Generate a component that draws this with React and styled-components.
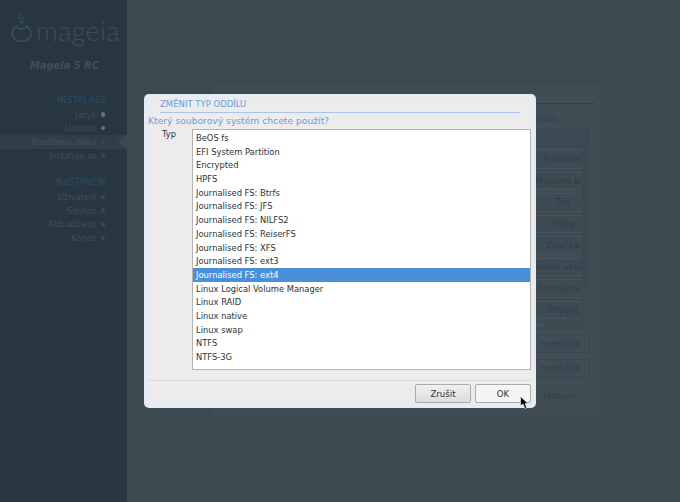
import React from 'react';
import styled, { createGlobalStyle } from 'styled-components';

const GlobalStyle = createGlobalStyle`
  html, body {
    margin: 0;
    padding: 0;
    width: 680px;
    height: 502px;
    overflow: hidden;
    background: #3c494f;
    font-family: "DejaVu Sans", sans-serif;
  }
`;

const Screen = styled.div`
  position: relative;
  display: flex;
  width: 680px;
  height: 502px;
  overflow: hidden;
`;

const Sidebar = styled.aside`
  width: 127px;
  flex-shrink: 0;
  background: #28373f;
  display: flex;
  flex-direction: column;
  padding-top: 12px;
  box-sizing: border-box;
`;

const LogoRow = styled.div`
  display: flex;
  align-items: flex-start;
  gap: 4px;
  height: 34px;
  padding-left: 11px;
`;

const LogoWord = styled.span`
  font-family: Lato, "Open Sans", sans-serif;
  font-weight: 300;
  font-size: 27px;
  line-height: 30px;
  margin-top: 4px;
  letter-spacing: 0.4px;
  color: #404e57;
`;

const Version = styled.div`
  margin: 13px 0 0 30px;
  font-size: 9.9px;
  line-height: 14px;
  font-style: italic;
  font-weight: bold;
  color: #414f58;
`;

const Section = styled.div`
  margin-top: ${(p) => p.$gap}px;
`;

const SectionTitle = styled.div`
  padding-right: 20px;
  text-align: right;
  font-size: 8.8px;
  line-height: 13.7px;
  letter-spacing: 0.2px;
  color: #2a4d66;
`;

const Step = styled.div`
  position: relative;
  display: flex;
  align-items: center;
  justify-content: flex-end;
  gap: 4px;
  height: 13.7px;
  padding-right: 22px;
  font-size: 8.4px;
  color: ${(p) => (p.$active ? '#46545d' : '#404e57')};
  background: ${(p) => (p.$active ? '#2f3e47' : 'transparent')};

  &::after {
    content: ${(p) => (p.$active ? "''" : 'none')};
    position: absolute;
    right: 0;
    top: -1px;
    border-style: solid;
    border-width: 8px 9px 8px 0;
    border-color: transparent #3c494f transparent transparent;
  }
`;

const Dot = styled.span`
  width: 4.5px;
  height: 4.5px;
  border-radius: 50%;
  background: ${(p) => (p.$done ? '#66737c' : '#39474f')};
`;

const Main = styled.main`
  flex: 1;
  padding: 85px 80px 85px 87px;
  box-sizing: border-box;
`;

const Wizard = styled.section`
  height: 332px;
  box-sizing: border-box;
  background: #404d55;
  border-radius: 6px;
  display: flex;
  flex-direction: column;
  align-items: flex-end;
  padding: 18px 10px 0 0;
`;

const WizardRule = styled.div`
  width: calc(100% - 5px);
  height: 1px;
  margin-right: -5px;
  background: #2d4350;
`;

const Hint = styled.div`
  margin: 9px 34px 0 0;
  font-size: 9px;
  line-height: 12px;
  color: #2b4252;
`;

const HeaderBox = styled.div`
  width: 100px;
  height: 20px;
  margin-top: 3px;
  background: #3b4952;
`;

const ActionPanel = styled.div`
  position: relative;
  display: flex;
  justify-content: flex-end;
  gap: 2px;
  width: 100px;
  height: 180px;
  margin-top: 2px;
  padding-right: 3px;
  box-sizing: border-box;
  background: #3e4b53;
`;

const ActionList = styled.div`
  display: flex;
  flex-direction: column;
`;

const ActionButton = styled.div`
  display: flex;
  justify-content: center;
  width: 90px;
  height: 18.5px;
  margin-bottom: 3px;
  box-sizing: border-box;
  padding-left: 54px;
  border-top: 1px solid #465460;
  border-bottom: 1px solid #465460;
  overflow: hidden;
  white-space: nowrap;
  font-size: 9px;
  line-height: 16.5px;
  color: #2f3e48;
`;

const ActionScroll = styled.div`
  width: 4px;
  height: 137px;
  background: #39474f;
`;

const ActionThumb = styled.div`
  position: absolute;
  left: 40px;
  bottom: 3px;
  width: 14px;
  height: 3px;
  background: #465460;
`;

const FooterButton = styled.div`
  width: 60px;
  height: 18px;
  margin-top: ${(p) => p.$gap}px;
  box-sizing: border-box;
  border: 1px solid #394750;
  border-radius: 2px;
  text-align: center;
  font-size: 9px;
  line-height: 16px;
  color: #2f3e48;
  white-space: nowrap;
`;

const Dialog = styled.div`
  position: absolute;
  left: 144px;
  top: 94px;
  width: 392px;
  height: 314px;
  box-sizing: border-box;
  padding: 4px 3px 5px 4px;
  background: #e6ecf5;
  border-radius: 5px;
`;

const DialogBody = styled.div`
  height: 100%;
  box-sizing: border-box;
  padding-right: 2px;
  background: #ececec;
  display: flex;
  flex-direction: column;
  font-size: 8.4px;
  color: #2e3436;
`;

const DialogTitle = styled.div`
  margin: 0 11px 0 12px;
  height: 14px;
  border-bottom: 1px solid #a9c4ea;
  font-size: 8.5px;
  line-height: 12px;
  color: #6f9bd8;
`;

const Question = styled.div`
  height: 15px;
  margin-top: 1px;
  font-size: 9.2px;
  line-height: 14px;
  color: #6f9bd8;
`;

const FieldRow = styled.div`
  display: flex;
  height: 241px;
`;

const FieldLabel = styled.div`
  width: 44px;
  padding-left: 14px;
  box-sizing: border-box;
  line-height: 12px;
  margin-top: -1px;
`;

const List = styled.ul`
  flex: 1;
  margin: 0;
  padding: 1px 0 0;
  list-style: none;
  background: #fff;
  border: 1px solid #b4b4b4;
  overflow: hidden;
`;

const ListItem = styled.li`
  height: 13.7px;
  padding-left: 3px;
  font-size: 8.35px;
  line-height: 14.7px;
  white-space: nowrap;
  color: ${(p) => (p.$selected ? '#fff' : '#2e3436')};
  background: ${(p) => (p.$selected ? '#4a90d9' : 'transparent')};
`;

const ButtonBar = styled.div`
  margin-top: 10px;
  padding-top: 3px;
  border-top: 1px solid #d8d8d8;
  display: flex;
  justify-content: flex-end;
  gap: 4px;
`;

const PushButton = styled.button`
  width: 56px;
  height: 19px;
  padding: 0;
  border: 1px solid #aaa;
  border-radius: 2px;
  background: ${(p) => (p.$focused ? '#f4f4f4' : 'linear-gradient(#f0f0f0, #dcdcdc)')};
  font-family: inherit;
  font-size: 8.6px;
  color: #2e3436;
`;

const Pointer = styled.svg`
  position: absolute;
  left: 520px;
  top: 396px;
`;

const installSteps = [
  { label: 'Jazyk', done: true },
  { label: 'Licence', done: true },
  { label: 'Rozdělení disku', active: true },
  { label: 'Instaluje se' },
];

const setupSteps = ['Uživatelé', 'Souhrn', 'Aktualizace', 'Konec'];

const actions = ['Prohlížet', 'Přípojný bod', 'Typ', 'Volby', 'Značka', 'Změnit velikost', 'Formátovat', 'Připojit'];

const filesystems = [
  'BeOS fs',
  'EFI System Partition',
  'Encrypted',
  'HPFS',
  'Journalised FS: Btrfs',
  'Journalised FS: JFS',
  'Journalised FS: NILFS2',
  'Journalised FS: ReiserFS',
  'Journalised FS: XFS',
  'Journalised FS: ext3',
  'Journalised FS: ext4',
  'Linux Logical Volume Manager',
  'Linux RAID',
  'Linux native',
  'Linux swap',
  'NTFS',
  'NTFS-3G',
];

const LogoMark = () => (
  <svg width="21" height="30" viewBox="0 0 21 30" fill="none">
    <circle cx="10" cy="2.5" r="1.3" fill="#2a4a60" />
    <circle cx="8.5" cy="6" r="1.4" fill="#2a4a60" />
    <circle cx="12" cy="6.5" r="1.3" fill="#2a4a60" />
    <circle cx="10" cy="10" r="1.5" fill="#2a4a60" />
    <circle cx="12.5" cy="10.5" r="1.2" fill="#2a4a60" />
    <path
      d="M5 14 C2.5 16 1 18.5 1 21.5 C1 26 5 29.5 10.5 29.5 C16 29.5 20 26 20 21.5 C20 18.5 18.5 16 16 14 C15 16 13 17 10.5 17 C8 17 6 16 5 14 Z"
      stroke="#404e57"
      strokeWidth="1.5"
    />
  </svg>
);

const App = () => (
  <Screen>
    <GlobalStyle />
    <Sidebar>
      <LogoRow>
        <LogoMark />
        <LogoWord>mageia</LogoWord>
      </LogoRow>
      <Version>Mageia 5 RC</Version>
      <Section $gap={21}>
        <SectionTitle>INSTALACE</SectionTitle>
        {installSteps.map((step) => (
          <Step key={step.label} $active={step.active}>
            {step.label}
            <Dot $done={step.done} />
          </Step>
        ))}
      </Section>
      <Section $gap={14}>
        <SectionTitle>NASTAVENÍ</SectionTitle>
        {setupSteps.map((label) => (
          <Step key={label}>
            {label}
            <Dot />
          </Step>
        ))}
      </Section>
    </Sidebar>
    <Main>
      <Wizard>
        <WizardRule />
        <Hint>nost</Hint>
        <HeaderBox />
        <ActionPanel>
          <ActionList>
            {actions.map((label) => (
              <ActionButton key={label}>{label}</ActionButton>
            ))}
          </ActionList>
          <ActionScroll />
          <ActionThumb />
        </ActionPanel>
        <FooterButton $gap={5}>rozmístit</FooterButton>
        <FooterButton $gap={6}>normální</FooterButton>
        <FooterButton $gap={10}>Hotovo</FooterButton>
      </Wizard>
    </Main>
    <Dialog>
      <DialogBody>
        <DialogTitle>ZMĚNIT TYP ODDÍLU</DialogTitle>
        <Question>Který souborový systém chcete použít?</Question>
        <FieldRow>
          <FieldLabel>Typ</FieldLabel>
          <List>
            {filesystems.map((name) => (
              <ListItem key={name} $selected={name === 'Journalised FS: ext4'}>
                {name}
              </ListItem>
            ))}
          </List>
        </FieldRow>
        <ButtonBar>
          <PushButton>Zrušit</PushButton>
          <PushButton $focused>OK</PushButton>
        </ButtonBar>
      </DialogBody>
    </Dialog>
    <Pointer width="9" height="13" viewBox="0 0 9 13">
      <path d="M0.5 0.5 L0.5 10 L3 8 L5 12.5 L6.8 11.7 L5 7.6 L8 7.6 Z" fill="#000" stroke="#fff" strokeWidth="0.6" />
    </Pointer>
  </Screen>
);

export default App;
